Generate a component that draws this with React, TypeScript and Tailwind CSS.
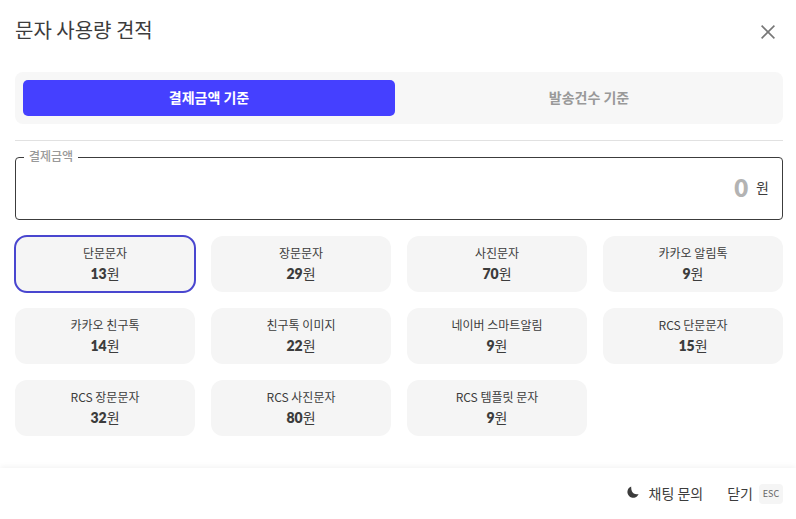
import { useState } from "react";
import { clsx } from "clsx";

const prices = [
  { name: "단문문자", price: 13 },
  { name: "장문문자", price: 29 },
  { name: "사진문자", price: 70 },
  { name: "카카오 알림톡", price: 9 },
  { name: "카카오 친구톡", price: 14 },
  { name: "친구톡 이미지", price: 22 },
  { name: "네이버 스마트알림", price: 9 },
  { name: "RCS 단문문자", price: 15 },
  { name: "RCS 장문문자", price: 32 },
  { name: "RCS 사진문자", price: 80 },
  { name: "RCS 템플릿 문자", price: 9 },
];

const tabs = ["결제금액 기준", "발송건수 기준"];

export default function App() {
  const [tab, setTab] = useState(0);
  const [selected, setSelected] = useState(0);

  return (
    <div className="flex h-screen flex-col overflow-hidden bg-white font-['Noto_Sans_CJK_KR',sans-serif] text-[#3c3c3c]">
      <header className="flex h-[72px] shrink-0 items-start justify-between pt-[15px] pr-[21px] pl-[15px]">
        <h1 className="text-xl leading-[30px]">문자 사용량 견적</h1>
        <button aria-label="닫기" className="mt-[10px]">
          <svg className="size-[14px]" viewBox="0 0 14 14" fill="none" stroke="#777" strokeWidth="1.6">
            <path d="M0.6 0.6 13.4 13.4M13.4 0.6 0.6 13.4" />
          </svg>
        </button>
      </header>

      <main className="flex-1 pr-[13px] pl-[15px]">
        <div className="grid h-[52px] grid-cols-2 gap-2 rounded-lg bg-[#f7f7f7] p-2">
          {tabs.map((label, i) => (
            <button
              key={label}
              onClick={() => setTab(i)}
              className={clsx(
                "h-9 rounded-[5px] pb-0.5 text-sm font-bold",
                tab === i ? "bg-[#4540ff] text-white" : "text-[#999]"
              )}
            >
              {label}
            </button>
          ))}
        </div>

        <hr className="mt-4 border-[#e1e1e1]" />

        <fieldset className="mt-1.5 h-[73px] rounded border border-[#3c3c3c] pr-[13px] pl-2">
          <legend className="px-[5px] pb-0.5 text-xs leading-[18px] font-medium text-[#999]">결제금액</legend>
          <div className="flex h-[42px] items-center justify-end gap-2">
            <span className="font-['Lato',sans-serif] text-2xl font-extrabold text-[#b3b3b3]">0</span>
            <span className="pb-0.5 text-sm">원</span>
          </div>
        </fieldset>

        <div className="mt-4 grid grid-cols-4 gap-4">
          {prices.map((item, i) => (
            <button
              key={item.name}
              onClick={() => setSelected(i)}
              className={clsx(
                "flex h-14 flex-col items-center justify-center rounded-xl bg-[#f5f5f5]",
                selected === i && "outline-2 -outline-offset-1 outline-[#4946cf]"
              )}
            >
              <span className="text-xs leading-[18px]">{item.name}</span>
              <span className="text-sm leading-[22px]">
                <b className="font-['Lato','Noto_Sans_CJK_KR',sans-serif] font-extrabold">{item.price}</b>원
              </span>
            </button>
          ))}
        </div>
      </main>

      <footer className="flex h-[51px] shrink-0 items-center justify-end pr-[13px] text-sm shadow-[0_-1px_6px_rgba(0,0,0,0.06)]">
        <button className="flex items-center">
          <svg className="mr-[10px] mb-[3px] size-3" viewBox="0 0 12 12" fill="#3c3c3c">
            <path d="M4.2 0.5A5.8 5.8 0 1 0 11.6 8.1C8.3 9 5.9 7.4 5 5.5 4.3 3.9 4.1 2.2 4.2 0.5Z" />
          </svg>
          <span className="pb-0.5">채팅 문의</span>
        </button>
        <button className="ml-6 flex items-center">
          <span className="pb-0.5">닫기</span>
          <kbd className="ml-1.5 flex h-5 w-6 items-center justify-center rounded bg-[#f5f5f5] pt-px font-['Noto_Sans_CJK_KR',sans-serif] text-[9px] text-[#666]">
            ESC
          </kbd>
        </button>
      </footer>
    </div>
  );
}
